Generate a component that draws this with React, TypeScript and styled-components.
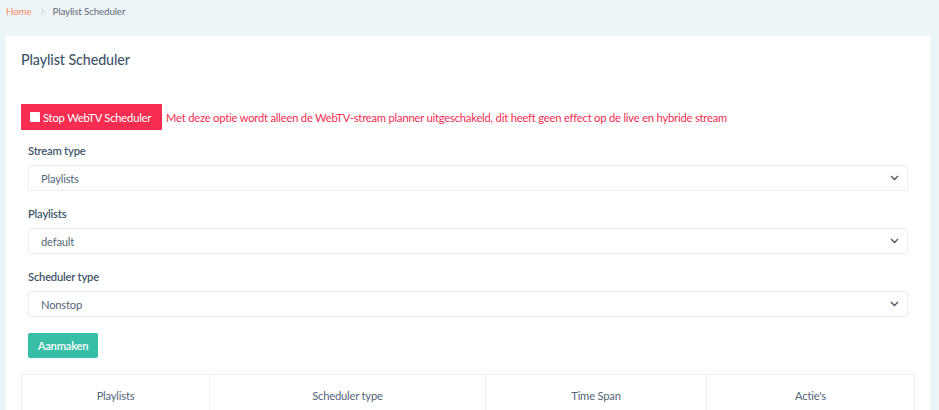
import React from "react";
import styled, { createGlobalStyle } from "styled-components";

const Global = createGlobalStyle`
  html, body { margin: 0; padding: 0; background: #eef5f9; }
  body { font-family: "Lato", "Noto Sans", sans-serif; color: #3e5569; }
  * { box-sizing: border-box; }
`;

const Page = styled.div`
  width: 939px;
  height: 410px;
  overflow: hidden;
  background: #eef5f9;
`;

const Breadcrumb = styled.nav`
  height: 36px;
  display: flex;
  align-items: flex-start;
  padding: 4px 0 0 6px;
  font-size: 9.8px;
  letter-spacing: -0.15px;
  line-height: 14px;
  gap: 8px;
`;

const Crumb = styled.span<{ $active?: boolean }>`
  color: ${(p) => (p.$active ? "#5f6b75" : "#fb8c67")};
`;

const Sep = styled.span`
  display: flex;
  align-items: center;
  height: 14px;
`;

const Card = styled.section`
  background: #ffffff;
  margin: 0 9px 0 6px;
  padding: 15px 15px 0 15px;
  height: 374px;
`;

const Title = styled.h4`
  margin: 0;
  font-size: 14.3px;
  letter-spacing: -0.1px;
  font-weight: 500;
  line-height: 18px;
  color: #3e5569;
`;

const NoticeRow = styled.div`
  margin-top: 35px;
  display: flex;
  align-items: center;
  gap: 4px;
`;

const DangerButton = styled.button`
  height: 26px;
  width: 141px;
  border: none;
  border-radius: 1px;
  background: #f62d51;
  color: #ffffff;
  font-family: inherit;
  font-size: 11.2px;
  letter-spacing: -0.2px;
  white-space: nowrap;
  display: flex;
  align-items: center;
  gap: 3px;
  padding: 0 0 0 9px;
`;

const Box = styled.span`
  width: 10px;
  height: 10px;
  background: #ffffff;
  border-radius: 1px;
  display: inline-block;
`;

const Notice = styled.span`
  color: #f62d51;
  font-size: 11.2px;
  letter-spacing: -0.2px;
  white-space: nowrap;
`;

const Form = styled.div`
  padding: 11px 7px 0 7px;
  display: flex;
  flex-direction: column;
`;

const Field = styled.div`
  display: flex;
  flex-direction: column;
  & + & { margin-top: 13px; }
`;

const Label = styled.label`
  font-size: 11.2px;
  letter-spacing: -0.2px;
  font-weight: 600;
  line-height: 20px;
  margin-bottom: 4px;
  color: #3e5569;
`;

const Select = styled.div`
  height: 26px;
  border: 1px solid #eceff2;
  border-radius: 2px;
  display: flex;
  align-items: center;
  justify-content: space-between;
  padding: 0 8px 0 12px;
  font-size: 11.2px;
  letter-spacing: -0.2px;
  color: #54667a;
`;

const SuccessButton = styled.button`
  margin-top: 16px;
  align-self: flex-start;
  height: 25px;
  width: 70px;
  border: none;
  border-radius: 2px;
  background: #36bea6;
  color: #ffffff;
  font-family: inherit;
  font-size: 11.2px;
  letter-spacing: -0.2px;
  font-weight: 600;
  padding: 0;
`;

const Table = styled.div`
  margin-top: 16px;
  display: grid;
  grid-template-columns: 188px 276px 221px 209px;
  border-top: 1px solid #eef0f2;
`;

const Th = styled.div`
  height: 40px;
  display: flex;
  align-items: center;
  justify-content: center;
  font-size: 11.2px;
  letter-spacing: -0.2px;
  color: #54667a;
  border-left: 1px solid #eef0f2;
  &:last-child { border-right: 1px solid #eef0f2; }
`;

const Chevron = () => (
  <svg width="9" height="6" viewBox="0 0 9 6" fill="none">
    <path d="M1 1l3.5 3.5L8 1" stroke="#4f5467" strokeWidth="1.4" />
  </svg>
);

const CrumbChevron = () => (
  <svg width="5" height="9" viewBox="0 0 5 9" fill="none">
    <path d="M0.8 0.8L4.2 4.5L0.8 8.2" stroke="#c3cad1" strokeWidth="1" />
  </svg>
);

const fields = [
  { label: "Stream type", value: "Playlists" },
  { label: "Playlists", value: "default" },
  { label: "Scheduler type", value: "Nonstop" },
];

export default function App() {
  return (
    <Page>
      <Global />
      <Breadcrumb>
        <Crumb>Home</Crumb>
        <Sep>
          <CrumbChevron />
        </Sep>
        <Crumb $active>Playlist Scheduler</Crumb>
      </Breadcrumb>
      <Card>
        <Title>Playlist Scheduler</Title>
        <NoticeRow>
          <DangerButton>
            <Box />
            Stop WebTV Scheduler
          </DangerButton>
          <Notice>
            Met deze optie wordt alleen de WebTV-stream planner uitgeschakeld, dit heeft geen effect op de live en hybride stream
          </Notice>
        </NoticeRow>
        <Form>
          {fields.map((f) => (
            <Field key={f.label}>
              <Label>{f.label}</Label>
              <Select>
                <span>{f.value}</span>
                <Chevron />
              </Select>
            </Field>
          ))}
          <SuccessButton>Aanmaken</SuccessButton>
        </Form>
        <Table>
          <Th>Playlists</Th>
          <Th>Scheduler type</Th>
          <Th>Time Span</Th>
          <Th>Actie's</Th>
        </Table>
      </Card>
    </Page>
  );
}
